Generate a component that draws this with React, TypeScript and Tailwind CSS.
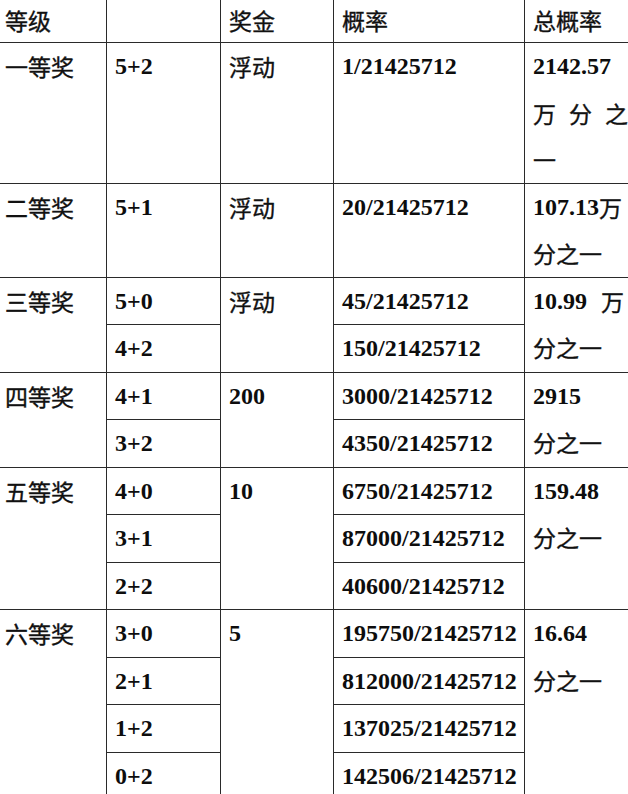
import React from "react";

const cn = "inline-block align-top font-['Noto_Sans_CJK_SC','Noto_Sans',sans-serif] text-[23px] font-normal text-[#111] [-webkit-text-stroke:0.35px_#111]";
const num = "inline-block align-top font-['Liberation_Serif','Times_New_Roman',serif] text-[24px] font-bold text-[#0d0d0d]";

const base = "border border-[#2a2a2a] align-top pr-0 py-0 leading-[46.5px] text-[16px] whitespace-nowrap overflow-hidden";
const td = base + " pl-[8px]";
const tdFirst = base + " pl-[5px]";

function Cn({ children }: { children: React.ReactNode }) {
  return <span className={cn}>{children}</span>;
}
function Num({ children }: { children: React.ReactNode }) {
  return <span className={num}>{children}</span>;
}

type Group = {
  level: string;
  combos: string[];
  prize: React.ReactNode;
  probs: string[];
  total: React.ReactNode;
  height?: number;
};

const D = "/21425712";
const line = "h-[46.5px] leading-[46.5px] overflow-hidden";

const groups: Group[] = [
  {
    level: "一等奖",
    combos: ["5+2"],
    prize: <Cn>浮动</Cn>,
    probs: ["1" + D],
    height: 137,
    total: (
      <div className="flex flex-col">
        <div className={line}><Num>2142.57</Num></div>
        <div className={line + " flex w-[95px] justify-between"}><Cn>万</Cn><Cn>分</Cn><Cn>之</Cn></div>
        <div className={line}><Cn>一</Cn></div>
      </div>
    ),
  },
  {
    level: "二等奖",
    combos: ["5+1"],
    prize: <Cn>浮动</Cn>,
    probs: ["20" + D],
    height: 94,
    total: (
      <div className="flex flex-col">
        <div className={line}><Num>107.13</Num><Cn>万</Cn></div>
        <div className={line}><Cn>分之一</Cn></div>
      </div>
    ),
  },
  {
    level: "三等奖",
    combos: ["5+0", "4+2"],
    prize: <Cn>浮动</Cn>,
    probs: ["45" + D, "150" + D],
    total: (
      <div className="flex flex-col">
        <div className={line + " flex w-[91px] justify-between"}><Num>10.99</Num><Cn>万</Cn></div>
        <div className={line}><Cn>分之一</Cn></div>
      </div>
    ),
  },
  {
    level: "四等奖",
    combos: ["4+1", "3+2"],
    prize: <Num>200</Num>,
    probs: ["3000" + D, "4350" + D],
    total: (
      <div className="flex flex-col">
        <div className={line}><Num>2915</Num></div>
        <div className={line}><Cn>分之一</Cn></div>
      </div>
    ),
  },
  {
    level: "五等奖",
    combos: ["4+0", "3+1", "2+2"],
    prize: <Num>10</Num>,
    probs: ["6750" + D, "87000" + D, "40600" + D],
    total: (
      <div className="flex flex-col">
        <div className={line}><Num>159.48</Num></div>
        <div className={line}><Cn>分之一</Cn></div>
      </div>
    ),
  },
  {
    level: "六等奖",
    combos: ["3+0", "2+1", "1+2", "0+2"],
    prize: <Num>5</Num>,
    probs: ["195750" + D, "812000" + D, "137025" + D, "142506" + D],
    total: (
      <div className="flex flex-col">
        <div className={line}><Num>16.64</Num></div>
        <div className={line}><Cn>分之一</Cn></div>
      </div>
    ),
  },
];

export default function App() {
  return (
    <div className="w-[628px] h-[794px] overflow-hidden bg-white">
      <table className="table-fixed border-collapse -ml-[1px] -mt-[1px] w-[642px]">
        <colgroup>
          <col className="w-[107px]" />
          <col className="w-[114px]" />
          <col className="w-[113px]" />
          <col className="w-[191px]" />
          <col className="w-[117px]" />
        </colgroup>
        <tbody>
          <tr className="h-[43px]">
            <td className={tdFirst + " !leading-[40px]"}><Cn>等级</Cn></td>
            <td className={td + " !leading-[40px]"}></td>
            <td className={td + " !leading-[40px]"}><Cn>奖金</Cn></td>
            <td className={td + " !leading-[40px]"}><Cn>概率</Cn></td>
            <td className={td + " !leading-[40px]"}><Cn>总概率</Cn></td>
          </tr>
          {groups.map((g) => {
            const n = g.combos.length;
            return g.combos.map((c, i) => (
              <tr
                key={g.level + c}
                style={{ height: n === 1 ? g.height : 46.4 }}
              >
                {i === 0 && (
                  <td rowSpan={n} className={tdFirst}>
                    <Cn>{g.level}</Cn>
                  </td>
                )}
                <td className={td}>
                  <Num>{c}</Num>
                </td>
                {i === 0 && (
                  <td rowSpan={n} className={td}>
                    {g.prize}
                  </td>
                )}
                <td className={td}>
                  <Num>{g.probs[i]}</Num>
                </td>
                {i === 0 && (
                  <td rowSpan={n} className={td}>
                    {g.total}
                  </td>
                )}
              </tr>
            ));
          })}
        </tbody>
      </table>
    </div>
  );
}
